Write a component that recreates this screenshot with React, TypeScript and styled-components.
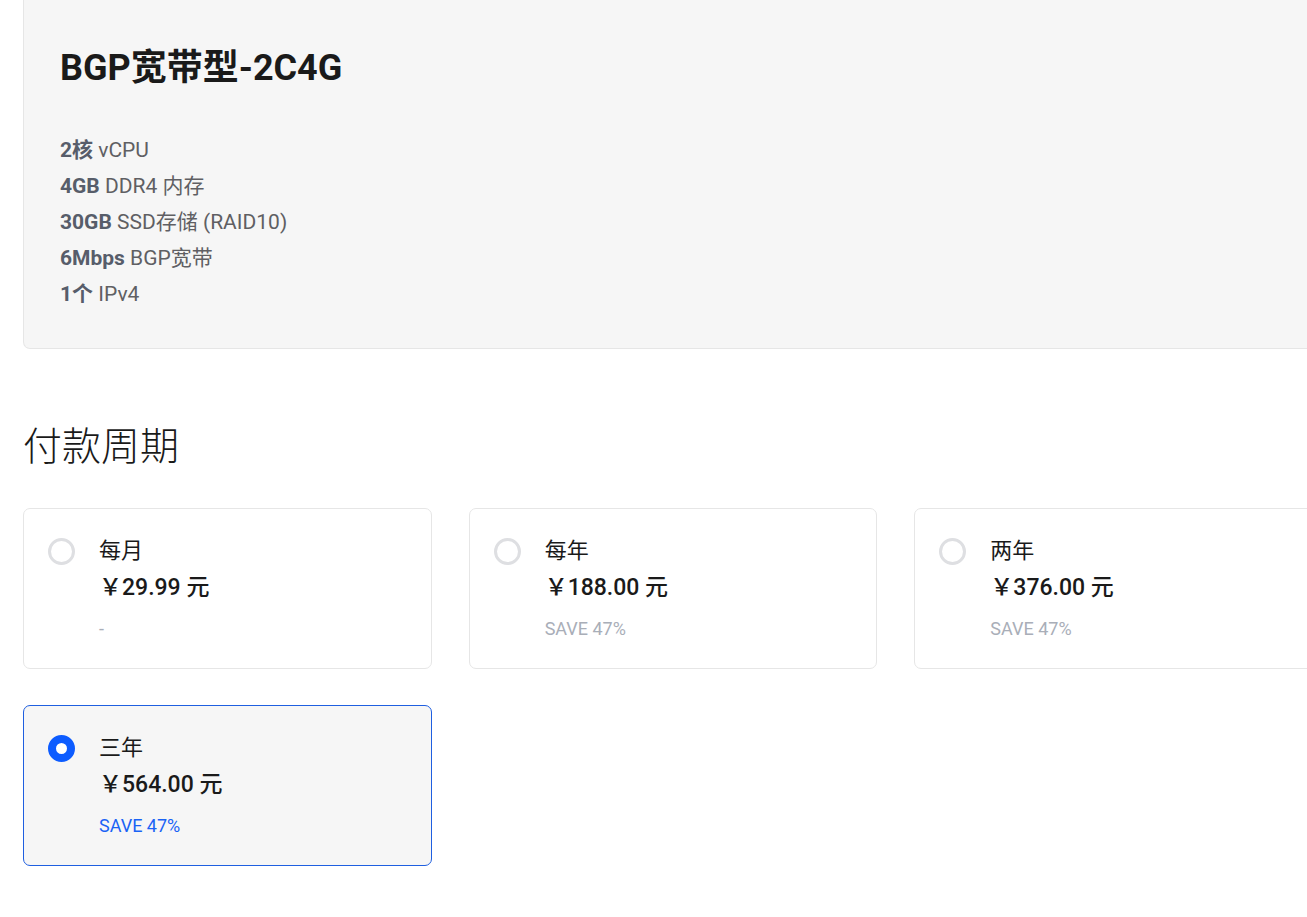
import React, { useState } from "react";
import styled, { createGlobalStyle } from "styled-components";

const Global = createGlobalStyle`
  html, body {
    margin: 0;
    padding: 0;
    background: #ffffff;
    overflow-x: hidden;
  }
  body {
    font-family: Roboto, "Noto Sans CJK SC", "Noto Sans", sans-serif;
    color: #1a1a1a;
  }
`;

const Page = styled.div`
  padding-left: 23px;
  width: 1300px;
  padding-bottom: 40px;
`;

const ProductPanel = styled.section`
  background: #f6f6f6;
  border: 1px solid #e6e6e6;
  border-top: none;
  border-radius: 0 0 7px 7px;
  padding: 49px 36px 36px;
`;

const ProductTitle = styled.h1`
  margin: 0;
  font-size: 36px;
  line-height: 38px;
  font-weight: 700;
  color: #1a1a1a;
`;

const SpecList = styled.ul`
  list-style: none;
  margin: 45px 0 0;
  padding: 0;
`;

const SpecItem = styled.li`
  font-size: 21px;
  line-height: 36px;
  color: #5f5f63;
`;

const SpecStrong = styled.strong`
  font-weight: 700;
  color: #575d6a;
`;

const SectionTitle = styled.h2`
  margin: 75px 0 0;
  font-size: 39px;
  line-height: 46px;
  font-weight: 300;
  color: #1a1a1a;
`;

const CycleGrid = styled.div`
  margin-top: 38px;
  display: grid;
  grid-template-columns: repeat(3, 1fr);
  column-gap: 37px;
  row-gap: 36px;
`;

const CycleCard = styled.label<{ $active: boolean }>`
  display: grid;
  grid-template-columns: 27px 1fr;
  column-gap: 24px;
  align-items: start;
  height: 161px;
  box-sizing: border-box;
  padding: 28px 24px;
  border: 1px solid ${(p) => (p.$active ? "#1f5fe0" : "#e6e6e6")};
  border-radius: 7px;
  background: ${(p) => (p.$active ? "#f6f6f6" : "#ffffff")};
  cursor: pointer;
`;

const Radio = styled.span<{ $active: boolean }>`
  display: block;
  width: 27px;
  height: 27px;
  box-sizing: border-box;
  border-radius: 50%;
  margin-top: 1px;
  border: ${(p) => (p.$active ? "8.5px solid #0d5cff" : "3px solid #dedfe2")};
  background: #ffffff;
`;

const CycleText = styled.div`
  display: flex;
  flex-direction: column;
`;

const CycleLabel = styled.div`
  font-size: 22px;
  line-height: 28px;
  color: #1a1a1a;
`;

const CyclePrice = styled.div`
  margin-top: 7px;
  font-size: 23px;
  line-height: 32px;
  font-weight: 500;
  color: #1a1a1a;
`;

const CycleSave = styled.div<{ $active: boolean }>`
  margin-top: 13px;
  font-size: 18px;
  line-height: 24px;
  color: ${(p) => (p.$active ? "#1a63f5" : "#a9aeb8")};
`;

const specs = [
  ["2核", "vCPU"],
  ["4GB", "DDR4 内存"],
  ["30GB", "SSD存储 (RAID10)"],
  ["6Mbps", "BGP宽带"],
  ["1个", "IPv4"],
];

const cycles = [
  { label: "每月", price: "￥29.99 元", save: "-" },
  { label: "每年", price: "￥188.00 元", save: "SAVE 47%" },
  { label: "两年", price: "￥376.00 元", save: "SAVE 47%" },
  { label: "三年", price: "￥564.00 元", save: "SAVE 47%" },
];

export default function App() {
  const [selected, setSelected] = useState(3);
  return (
    <Page>
      <Global />
      <ProductPanel>
        <ProductTitle>BGP宽带型-2C4G</ProductTitle>
        <SpecList>
          {specs.map(([b, t]) => (
            <SpecItem key={b}>
              <SpecStrong>{b}</SpecStrong> {t}
            </SpecItem>
          ))}
        </SpecList>
      </ProductPanel>
      <SectionTitle>付款周期</SectionTitle>
      <CycleGrid>
        {cycles.map((c, i) => (
          <CycleCard key={c.label} $active={selected === i} onClick={() => setSelected(i)}>
            <Radio $active={selected === i} />
            <CycleText>
              <CycleLabel>{c.label}</CycleLabel>
              <CyclePrice>{c.price}</CyclePrice>
              <CycleSave $active={selected === i}>{c.save}</CycleSave>
            </CycleText>
          </CycleCard>
        ))}
      </CycleGrid>
    </Page>
  );
}
